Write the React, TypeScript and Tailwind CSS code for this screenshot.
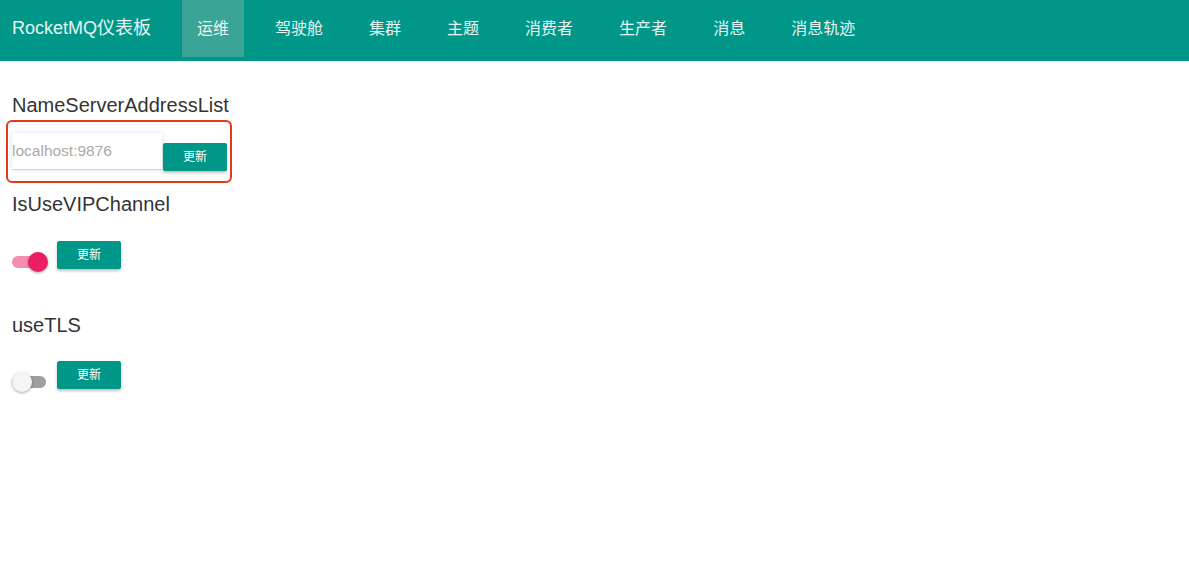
import React, { useState } from "react";

const font = { fontFamily: '"Liberation Sans", Arial, "Noto Sans CJK SC", sans-serif' };

const navItems = ["运维", "驾驶舱", "集群", "主题", "消费者", "生产者", "消息", "消息轨迹"];

function UpdateButton({ className = "" }: { className?: string }) {
  return (
    <button
      className={
        "w-16 h-7 rounded-[2px] bg-[#009688] text-white text-[12px] shadow-[0_2px_3px_rgba(0,0,0,0.25)] " +
        className
      }
    >
      更新
    </button>
  );
}

function Toggle({ on }: { on: boolean }) {
  return (
    <div className="relative w-9 h-5 mt-[11px]">
      <div
        className={
          "absolute left-0 top-[4px] w-[34px] h-[12px] rounded-full " +
          (on ? "bg-[#f48fb1]" : "bg-[#9e9e9e]")
        }
      />
      <div
        className={
          "absolute top-0 w-5 h-5 rounded-full shadow-[0_1px_3px_rgba(0,0,0,0.35)] " +
          (on ? "left-[16px] bg-[#e91e63]" : "left-0 bg-[#f5f5f5]")
        }
      />
    </div>
  );
}

export default function App() {
  const [active] = useState(0);
  return (
    <div className="min-h-screen bg-white text-[#333]" style={font}>
      <nav className="h-[61px] bg-[#009688] flex items-start">
        <div className="h-[57px] flex items-center pl-3 pr-[31px] text-[18px] text-white/90">
          RocketMQ仪表板
        </div>
        <ul className="flex gap-4 h-[57px]">
          {navItems.map((item, i) => (
            <li
              key={item}
              className={
                "h-full px-[15px] flex items-center text-[16px] text-white/90 " +
                (i === active ? "bg-[#3aa597]" : "")
              }
            >
              {item}
            </li>
          ))}
        </ul>
      </nav>

      <div className="relative pl-3 pt-8">
        {/* annotation box */}
        <div className="absolute left-[6px] top-[59px] w-[226px] h-[63px] border-[2.5px] border-[#e6371e] rounded-[6px] pointer-events-none" />

        <div className="text-[20px] leading-6">NameServerAddressList</div>
        <div className="flex items-end mt-4">
          <div className="w-[150px] h-[37px] flex items-center border-b border-[#cfd3d6] shadow-[0_0_5px_rgba(120,160,220,0.35)] text-[15.5px] text-[#aaa] font-light">
            localhost:9876
          </div>
          <UpdateButton className="ml-px mb-[-1px]" />
        </div>

        <div className="text-[20px] leading-6 mt-[22px]">IsUseVIPChannel</div>
        <div className="flex items-start mt-[25px]">
          <Toggle on={true} />
          <UpdateButton className="ml-[9px]" />
        </div>

        <div className="text-[20px] leading-6 mt-[41px]">useTLS</div>
        <div className="flex items-start mt-6">
          <Toggle on={false} />
          <UpdateButton className="ml-[9px]" />
        </div>
      </div>
    </div>
  );
}
